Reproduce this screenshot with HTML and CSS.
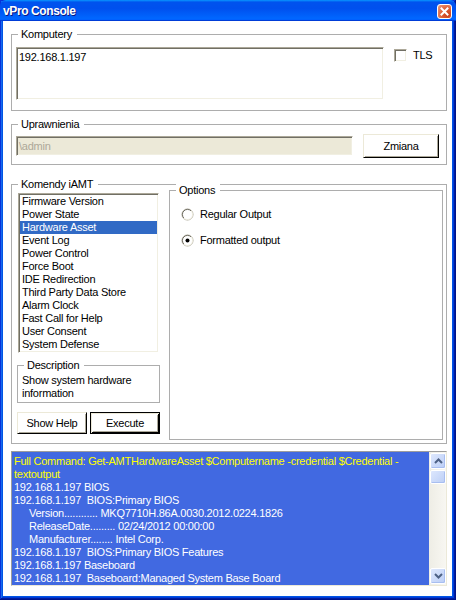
FILE: index.html
```html
<!DOCTYPE html>
<html>
<head>
<meta charset="utf-8">
<title>vPro Console</title>
<link rel="stylesheet" href="styles.css">
</head>
<body>
<div class="window">
  <div class="titlebar">
    <span class="title">vPro Console</span>
    <span class="close"><svg width="13" height="13" viewBox="0 0 13 13"><path d="M3.5 3.5 L9.5 9.5 M9.5 3.5 L3.5 9.5" stroke="#fff" stroke-width="2" stroke-linecap="square"/></svg></span>
  </div>
  <div class="client">
    <div class="group komp">
      <div class="legend">Komputery</div>
      <div class="gbody komp-body">
        <div class="textarea sunken">192.168.1.197</div>
        <div class="check"><span class="checkbox sunken"></span><span>TLS</span></div>
      </div>
    </div>

    <div class="group upr">
      <div class="legend">Uprawnienia</div>
      <div class="gbody upr-body">
        <div class="input sunken">\admin</div>
        <div class="btn zmiana">Zmiana</div>
      </div>
    </div>

    <div class="group kom">
      <div class="legend">Komendy iAMT</div>
      <div class="gbody kom-body">
        <div class="leftcol">
          <div class="listbox sunken">
            <div class="item">Firmware Version</div>
            <div class="item">Power State</div>
            <div class="item selected">Hardware Asset</div>
            <div class="item">Event Log</div>
            <div class="item">Power Control</div>
            <div class="item">Force Boot</div>
            <div class="item">IDE Redirection</div>
            <div class="item">Third Party Data Store</div>
            <div class="item">Alarm Clock</div>
            <div class="item">Fast Call for Help</div>
            <div class="item">User Consent</div>
            <div class="item">System Defense</div>
          </div>
          <div class="group desc">
            <div class="legend">Description</div>
            <div class="gbody desc-body">Show system hardware<br>information</div>
          </div>
          <div class="btnrow">
            <div class="btn small">Show Help</div>
            <div class="btn small default">Execute</div>
          </div>
        </div>
        <div class="group opts">
          <div class="legend">Options</div>
          <div class="gbody opts-body">
            <div class="radio-row">
              <svg class="radio" width="13" height="13" viewBox="0 0 13 13"><circle cx="6.5" cy="6.5" r="5.5" fill="#fff" stroke="#ACA899"/><path d="M2.9 10.1 A4.6 4.6 0 0 1 10.1 2.9" fill="none" stroke="#716F64"/><path d="M10.1 2.9 A4.6 4.6 0 0 1 2.9 10.1" fill="none" stroke="#F1EFE2"/></svg>
              <span>Regular Output</span>
            </div>
            <div class="radio-row second">
              <svg class="radio" width="13" height="13" viewBox="0 0 13 13"><circle cx="6.5" cy="6.5" r="5.5" fill="#fff" stroke="#ACA899"/><path d="M2.9 10.1 A4.6 4.6 0 0 1 10.1 2.9" fill="none" stroke="#716F64"/><path d="M10.1 2.9 A4.6 4.6 0 0 1 2.9 10.1" fill="none" stroke="#F1EFE2"/><circle cx="6.5" cy="6.5" r="2" fill="#000"/></svg>
              <span>Formatted output</span>
            </div>
          </div>
        </div>
      </div>
    </div>

    <div class="output">
      <div class="console">
        <div class="ln yl">Full Command: Get-AMTHardwareAsset $Computername -credential $Credential -</div>
        <div class="ln yl">textoutput</div>
        <div class="ln">192.168.1.197 BIOS</div>
        <div class="ln">192.168.1.197  BIOS:Primary BIOS</div>
        <div class="ln ind">Version............ MKQ7710H.86A.0030.2012.0224.1826</div>
        <div class="ln ind">ReleaseDate......... 02/24/2012 00:00:00</div>
        <div class="ln ind">Manufacturer........ Intel Corp.</div>
        <div class="ln">192.168.1.197  BIOS:Primary BIOS Features</div>
        <div class="ln">192.168.1.197 Baseboard</div>
        <div class="ln">192.168.1.197  Baseboard:Managed System Base Board</div>
      </div>
      <div class="scrollbar">
        <div class="sb-btn"><svg width="9" height="6" viewBox="0 0 9 6"><path d="M1 5 L4.5 1.5 L8 5" fill="none" stroke="#4D6185" stroke-width="2"/></svg></div>
        <div class="sb-thumb"></div>
        <div class="sb-btn down"><svg width="9" height="6" viewBox="0 0 9 6"><path d="M1 1 L4.5 4.5 L8 1" fill="none" stroke="#4D6185" stroke-width="2"/></svg></div>
      </div>
    </div>
  </div>
</div>
</body>
</html>
```

FILE: styles.css
```css
* { box-sizing: border-box; }
html, body { margin: 0; padding: 0; }
body {
  width: 456px;
  height: 600px;
  font-family: "Liberation Sans", Arial, sans-serif;
  font-size: 11px;
  line-height: 13px;
  letter-spacing: -0.25px;
  color: #000;
  background: #fff;
}
.window {
  width: 456px;
  height: 600px;
  display: flex;
  flex-direction: column;
  background: #0055E5;
  box-shadow: inset -1px -1px #00138c, inset 1px 1px #0831d9, inset -2px -2px #001ea0, inset 2px 2px #166aee, inset -3px -3px #003bda;
}
.titlebar {
  height: 21px;
  display: flex;
  align-items: center;
  justify-content: space-between;
  padding: 0 4px 0 3px;
  background: linear-gradient(180deg, #0997ff, #0053ee 10%, #0050ee 40%, #0066ff 86%, #0066ff 92%, #005bff 94%, #003dd7 96%, #003dd7);
  border-radius: 6px 6px 0 0;
}
.title {
  color: #fff;
  font-weight: bold;
  font-size: 12px;
  letter-spacing: -0.4px;
  text-shadow: 1px 1px 0 #0a1883;
  margin-top: 1px;
}
.close {
  width: 15px;
  height: 15px;
  border: 1px solid #fff;
  border-radius: 3px;
  background: radial-gradient(circle at 75% 75%, #c8401c 0%, #dd5f36 45%, #e98d6b 85%, #f5c2ad 100%);
  display: flex;
  align-items: center;
  justify-content: center;
  margin-top: 1px;
}
.client {
  flex: 1;
  margin: 0 4px 4px 3px;
  background: #fff;
  padding: 0 5px 0 8px;
  display: flex;
  flex-direction: column;
}
.group {
  border: 1px solid #ADADAD;
}
.legend {
  width: max-content;
  height: 13px;
  margin: -7px 0 -6px 6px;
  padding: 0 5px 0 3px;
  background: #fff;
}
.sunken {
  border: 1px solid;
  border-color: #ACA899 #fff #fff #ACA899;
  box-shadow: inset 1px 1px 0 #716F64, inset -1px -1px 0 #F1EFE2;
  background: #fff;
}

/* Komputery */
.komp { margin-top: 13px; }
.komp-body {
  display: flex;
  align-items: flex-start;
  padding: 12px 0 10px 4px;
}
.textarea {
  width: 368px;
  height: 53px;
  padding: 3px 2px;
}
.check {
  display: flex;
  align-items: center;
  gap: 6px;
  margin: 2px 0 0 10px;
  height: 13px;
}
.checkbox {
  display: block;
  width: 13px;
  height: 13px;
}

/* Uprawnienia */
.upr { margin-top: 13px; }
.upr-body {
  display: flex;
  align-items: flex-start;
  padding: 9px 0 6px 4px;
}
.input {
  width: 337px;
  height: 20px;
  margin-top: 2px;
  padding: 3px 2px;
  background: #ECE9D8;
  color: #ACA899;
}
.btn {
  display: flex;
  align-items: center;
  justify-content: center;
  background: #fff;
  border: 1px solid;
  border-color: #ECE9D8 #000 #000 #ECE9D8;
  box-shadow: inset 1px 1px 0 #fff, inset -1px -1px 0 #ACA899;
}
.zmiana {
  width: 76px;
  height: 24px;
  margin-left: 10px;
}

/* Komendy */
.kom { margin-top: 19px; }
.kom-body {
  display: flex;
  gap: 9px;
  padding: 5px 3px 3px 5px;
}
.leftcol {
  width: 143px;
  display: flex;
  flex-direction: column;
}
.listbox {
  width: 141px;
  height: 160px;
  margin: 3px 0 0 1px;
  padding: 1px 1px;
}
.item {
  height: 13px;
  padding-left: 2px;
  white-space: nowrap;
}
.item.selected {
  background: #316AC5;
  color: #fff;
}
.desc { margin-top: 12px; }
.desc-body { padding: 8px 2px 2px 4px; }
.btnrow {
  display: flex;
  gap: 3px;
  margin-top: 9px;
}
.btn.small {
  width: 70px;
  height: 22px;
}
.btn.default {
  border-color: #000;
  box-shadow: inset 1px 1px 0 #ECE9D8, inset -1px -1px 0 #000, inset 2px 2px 0 #fff, inset -2px -2px 0 #ACA899;
}
.opts {
  flex: 1;
  height: 250px;
}
.opts-body { padding: 17px 0 0 11px; }
.radio-row {
  display: flex;
  align-items: center;
  gap: 6px;
  height: 13px;
}
.radio-row.second { margin-top: 13px; }
.radio { display: block; }

/* Output */
.output {
  margin-top: 7px;
  height: 135px;
  display: flex;
  border: 1px solid;
  border-color: #9D9D9D #ECE9D8 #ECE9D8 #9D9D9D;
}
.console {
  flex: 1;
  background: #4169E1;
  color: #fff;
  padding: 3px 0 0 2px;
  overflow: hidden;
}
.console .ln {
  height: 13px;
  white-space: pre;
}
.console .yl { color: #FFFF00; }
.console .ind { padding-left: 15px; }
.scrollbar {
  width: 17px;
  display: flex;
  flex-direction: column;
  padding: 1px 0 1px 1px;
  background: linear-gradient(90deg, #EEEDE5, #F8F7F2);
}
.sb-btn, .sb-thumb {
  width: 16px;
  border: 1px solid #fff;
  border-radius: 2px;
  background: linear-gradient(135deg, #DDE7FD, #BBCEF6);
  box-shadow: inset -1px -1px 0 #A8BEF0;
}
.sb-btn {
  height: 16px;
  display: flex;
  align-items: center;
  justify-content: center;
}
.sb-thumb {
  height: 14px;
  margin-top: 1px;
}
.sb-btn.down { margin-top: auto; }
```
